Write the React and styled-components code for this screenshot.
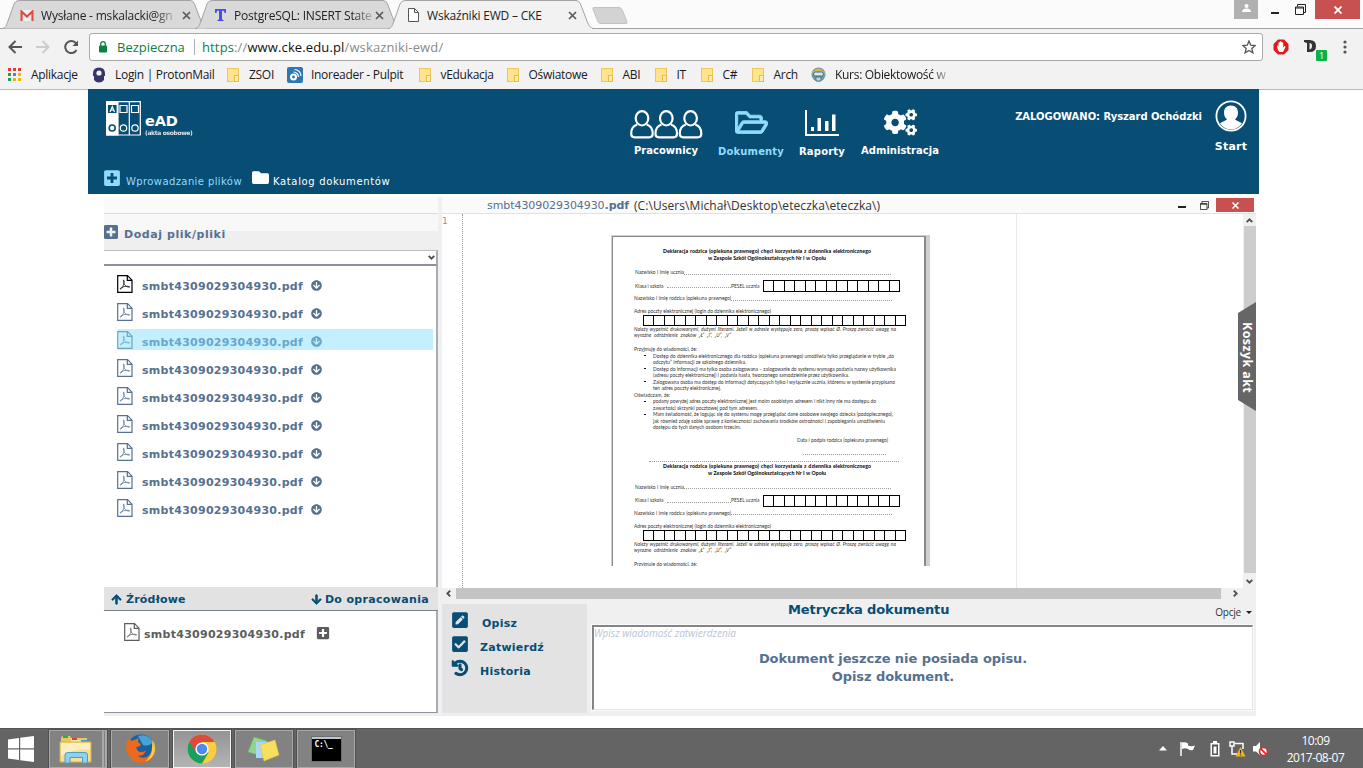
import React from "react";
import styled, { createGlobalStyle, css } from "styled-components";
import {
  FaArrowCircleDown, FaArrowDown, FaArrowUp, FaCheckSquare, FaCogs, FaFolder,
  FaHistory, FaPenSquare, FaPlusSquare, FaRegFolderOpen,
} from "react-icons/fa";

const ui = '"Open Sans", "Noto Sans", sans-serif';
const verdana = '"DejaVu Sans", sans-serif';
const navy = "#084d74";
const slate = "#56718f";
const sky = "#8fdcff";

const Global = createGlobalStyle`
  * { box-sizing: border-box; }
  body { margin: 0; background: #fff; overflow: hidden; }
  svg { display: block; flex: none; }
`;

const Screen = styled.div`
  width: 1363px; height: 768px; display: flex; flex-direction: column;
  font-family: ${ui}; font-size: 12px; color: #222; white-space: nowrap;
`;

/* ---------- browser chrome ---------- */
const TabStrip = styled.div`
  height: 29px; flex: none; display: flex; background: #fbfbfb; padding-left: 2px;
  border-bottom: 1px solid #a3a3a3;
`;
const TabBox = styled.div`
  position: relative; width: 206px; height: 29px; margin-right: -13px; flex: none;
  display: flex; align-items: center; padding: 1px 17px 0 18px; z-index: ${p => (p.$active ? 2 : 1)};
`;
const TabShape = styled.svg`position: absolute; left: 0; top: 0; z-index: -1;`;
const TabTitle = styled.span`
  flex: 1; margin-left: ${p => p.$gap}px; letter-spacing: -0.2px;
`;
const FadeText = styled.span`-webkit-mask-image: linear-gradient(90deg, #000 86%, rgba(0, 0, 0, .25));`;
const IconSlot = styled.span`width: ${p => p.$w}px; flex: none; display: flex; justify-content: center;`;
const NewTab = styled.div`
  width: 30px; height: 17px; margin: 7px 0 0 14px; background: #d3d3d3; border: 1px solid #c2c2c2;
  border-radius: 3px; transform: skewX(22deg);
`;
const WindowButtons = styled.div`margin-left: auto; display: flex; height: 19px; padding-right: 3px;`;
const UserBox = styled.div`width: 24px; background: #b0b0b0; display: flex; justify-content: center; padding-top: 4px;`;
const WinBtn = styled.div`
  width: ${p => p.$w}px; display: flex; align-items: center; justify-content: center;
  background: ${p => (p.$close ? "#c75050" : "transparent")};
`;
const Toolbar = styled.div`height: 36px; flex: none; background: #f2f2f2; display: flex; align-items: center; padding: 0 8px;`;
const NavIcons = styled.div`width: 81px; display: flex; gap: 14px;`;
const Omnibox = styled.div`
  width: 1174px; height: 28px; border: 1px solid #a9a9a9; border-radius: 3px; background: #fff;
  display: flex; align-items: center; padding: 0 6px 0 9px; font-size: 13px;
`;
const Secure = styled.span`color: #0b8043; margin-left: 10px; width: 77px;`;
const Divider = styled.span`width: 1px; height: 16px; background: #b0b0b0; margin-right: 7px;`;
const Url = styled.span`flex: 1; color: #8a8a8a; letter-spacing: .13px; b { font-weight: 400; color: #111; } i { font-style: normal; color: #0b8043; }`;
const Extensions = styled.div`flex: 1; display: flex; align-items: center; padding-left: 10px;`;
const ExtD = styled.div`position: relative; margin: 0 15px 0 15px; width: 24px; height: 26px; padding-top: 5px;`;
const Badge = styled.span`
  position: absolute; right: 1px; bottom: -1px; width: 11px; height: 11px; border-radius: 1px; background: #09b34b;
  color: #fff; font-size: 9px; line-height: 11px; text-align: center;
`;
const Bookmarks = styled.div`
  height: 25px; flex: none; background: #f2f2f2; border-bottom: 1px solid #b9b9b9;
  display: flex; align-items: center; padding: 0 0 5px 8px; letter-spacing: -0.3px; color: #1a1a1a;
`;
const Bookmark = styled.div`width: ${p => p.$w}px; display: flex; align-items: center; flex: none;`;
const BmText = styled.span`
  margin-left: ${p => p.$gap || 10}px;
  ${p => p.$fade && css`-webkit-mask-image: linear-gradient(90deg, #000 86%, rgba(0, 0, 0, .35));`}
`;
const FolderMark = styled.span`
  width: 12px; height: 14px; background: #ffe48c; border: 1px solid #ecc75a; flex: none; position: relative;
  &::after { content: ""; position: absolute; right: -1px; bottom: -1px; width: 3px; height: 5px; border: 1px solid #e5bd48; background: #ffedb0; }
`;

/* ---------- application ---------- */
const Main = styled.main`width: 1171px; height: 638px; margin-left: 88px; flex: none; display: flex; flex-direction: column;`;
const Header = styled.header`
  height: 105px; flex: none; background: ${navy}; color: #fff; font-family: ${verdana};
  display: flex; flex-direction: column; padding: 11px 11px 0 16px; margin-top: -1px;
`;
const HeaderTop = styled.div`display: flex; height: 70px;`;
const Brand = styled.div`width: 526px; display: flex; padding: 1px 0 0 2px;`;
const BrandText = styled.div`margin: 12px 0 0 4px; display: flex; flex-direction: column;`;
const BrandName = styled.b`font-size: 14.5px; line-height: 17px; letter-spacing: -0.2px;`;
const BrandSub = styled.b`font-size: 6px; line-height: 6px; letter-spacing: -0.35px; opacity: .85;`;
const NavItem = styled.div`
  width: ${p => p.$w}px; margin-right: ${p => p.$mr || 0}px; color: ${p => (p.$active ? sky : "#fff")};
  display: flex; flex-direction: column; align-items: center; flex: none;
  font-weight: 700; font-size: 10px; line-height: 13px; letter-spacing: ${p => p.$ls || 0}px;
`;
const NavIcon = styled.div`height: ${p => p.$h}px; display: flex; align-items: center; padding-top: ${p => p.$pt || 0}px;`;
const UserInfo = styled.b`margin-left: auto; margin-top: 10px; font-size: 10px; letter-spacing: -0.05px; line-height: 13px;`;
const StartItem = styled.div`
  width: 34px; margin-left: 12px; display: flex; flex-direction: column; align-items: center;
  font-size: 11px; font-weight: 700; gap: 8px; letter-spacing: .2px; line-height: 13px;
`;
const SubNav = styled.div`display: flex; align-items: flex-start; font-size: 10px; margin: -1px 0 0 -1px;`;
const SubText = styled.span`margin: ${p => p.$m}; line-height: 13px; letter-spacing: ${p => p.$ls}px; color: ${p => p.$c || "#fff"};`;

const Body = styled.div`flex: 1; display: flex; padding: 3px 0 0 16px; min-height: 0;`;
const Left = styled.section`
  width: 338px; display: flex; flex-direction: column; font-family: ${verdana}; height: 519px; flex: none;
  border-right: 4px solid #f0f0f0; border-bottom: 3px solid #eee;
`;
const LeftCap = styled.div`height: 17px; background: #fafafa; border-bottom: 1px solid #dcdcdc;`;
const AddBar = styled.div`
  height: 36px; background: linear-gradient(#f8f8f8 0 17px, #efefef 17px); display: flex; align-items: center;
  color: ${slate}; font-size: 11px; font-weight: 700; letter-spacing: .56px; gap: 5px;
  svg { margin-left: -1px; } span { margin-top: 4px; }
`;
const Select = styled.div`
  height: 16px; background: #fff; border-top: 1px solid #bdbdbd; border-right: 2px solid #a9adb5; border-bottom: 2px solid #8e939b;
  display: flex; align-items: center; justify-content: flex-end; padding-right: 0;
`;
const Files = styled.div`
  height: ${p => p.$h}px; border-right: 2px solid #a9adb5; border-bottom: ${p => (p.$line ? "1px solid #8c929b" : 0)};
  background: #fff; padding: ${p => p.$pad};
`;
const FileRow = styled.div`
  display: flex; height: 21px; margin-bottom: 7px; align-items: center; padding-left: 1px;
  background: ${p => (p.$sel ? "linear-gradient(90deg, transparent 2px, #c3efff 2px)" : "none")};
  color: ${p => (p.$sel ? "#6ba5c8" : p.$grey ? "#5d5d5d" : slate)};
`;
const FileName = styled.b`font-size: 11px; line-height: 13px; letter-spacing: .27px; margin: 5px ${p => p.$mr || 8}px 0 ${p => p.$ml}px; width: 161px;`;
const RowMark = styled.span`margin-top: ${p => p.$mt}px;`;
const MoveBar = styled.div`
  height: 24px; background: #e2e2e2; border-bottom: 1px solid #7b8492; display: flex; align-items: center;
  padding: 1px 9px 0 7px; gap: 4px; color: ${navy}; font-weight: 700; font-size: 11px; letter-spacing: .2px;
  svg { stroke: currentColor; stroke-width: 34px; }
`;
const MoveTarget = styled.span`margin-left: auto; display: flex; align-items: center; gap: 3px; letter-spacing: .33px;`;

const Right = styled.section`width: 814px; height: 519px; flex: none; display: flex; flex-direction: column; background: #f0f0f0; border-bottom: 3px solid #eee;`;
const TitleBar = styled.div`
  height: 17px; background: #fafafa; border-bottom: 1px solid #e2e2e2; display: flex; align-items: center; padding-left: 45px;
`;
const TitleButtons = styled.div`display: flex; height: 14px; margin-right: 2px;`;
const DocName = styled.span`font-family: ${verdana}; font-size: 11px; letter-spacing: -0.07px; color: ${slate}; width: 147px;`;
const Path = styled.span`font-size: 12px; flex: 1; color: #333; letter-spacing: .07px;`;
const Editor = styled.div`height: 374px; display: flex; flex: none;`;
const Gutter = styled.div`
  width: 21px; border-right: 1px dotted #999; background: #fff; color: #8f8f8f; font: 9px/13px "DejaVu Sans Mono", monospace; padding-top: 1px;
`;
const Canvas = styled.div`width: 554px; background: #fff; border-right: 1px solid #e8e8e8; padding: 21px 0 0 148px;`;
const Blank = styled.div`flex: 1; background: #fff;`;
const VScroll = styled.div`position: relative; width: 13px; display: flex; flex-direction: column; align-items: center; padding: 2px 0;`;
const VThumb = styled.div`width: 12px; height: 347px; margin: 1px 0 4px; background: #cdcdcd;`;
const BasketTab = styled.div`
  position: absolute; left: -5px; top: 88px; width: 18px; height: 109px; background: #666;
  clip-path: polygon(0 11px, 100% 0, 100% 100%, 0 98px); display: flex; align-items: center; justify-content: center;
  writing-mode: vertical-rl; color: #fff; font: 700 12.5px ${ui}; letter-spacing: .4px; padding-top: 2px;
`;
const HScroll = styled.div`height: 11px; display: flex; align-items: center; padding-left: 2px; flex: none;`;
const HThumb = styled.div`width: 765px; height: 11px; background: #c4c4c4; margin: 0 10px 0 3px;`;

/* ---------- previewed form ---------- */
const PageEdge = styled.div`width: 319px; height: 331px; background: #d0d0d0; padding: 1px 4px 0 1px;`;
const Paper = styled.div`
  width: 314px; height: 330px; border: 2px solid #8a8a8a; border-bottom: 0; border-left-width: 1px; border-top-width: 1px;
  background: #fff; padding: 11px 0 0 21px; overflow: hidden; font-family: Lato, sans-serif; font-size: 4.9px; color: #333;
`;
const Line = styled.div`
  height: ${p => p.$h || 6.5}px; line-height: ${p => p.$h || 6.5}px; margin: ${p => p.$mt || 0}px 0 0 ${p => p.$x || 0}px;
  width: ${p => p.$w}px; white-space: nowrap; text-align: justify; text-align-last: justify; position: relative;
  font-weight: ${p => (p.$bold ? 900 : 400)}; font-style: ${p => (p.$it ? "italic" : "normal")};
  ${p => p.$it && css`letter-spacing: .06px; word-spacing: -0.2px;`}
  ${p => p.$bold && css`font-size: 5.2px; letter-spacing: ${p.$ls ?? 0.06}px; color: #111;`} flex: none;
`;
const Bullet = styled.span`position: absolute; left: -9px; top: 2.5px; width: 2px; height: 1px; background: #111;`;
const DotRow = styled.div`display: flex; align-items: center; height: ${p => p.$h || 7}px; margin: ${p => p.$mt || 0}px 0 0 ${p => p.$x || 0}px; line-height: 7px;`;
const Dots = styled.div`width: ${p => p.$w}px; margin: ${p => p.$m || "3px 0 0"}; border-top: 1px dotted #9c9c9c; flex: none;`;
const Cells = styled.div`
  display: flex; width: ${p => p.$w}px; height: ${p => p.$h}px; margin-left: ${p => p.$x}px;
  border: 1px solid #000; background: #fff; flex: none;
`;
const Cell = styled.span`flex: 1; border-right: 1px solid #000; &:last-child { border: 0; }`;

/* ---------- lower panel ---------- */
const Lower = styled.div`flex: 1; display: flex; padding-top: 5px;`;
const Actions = styled.div`
  width: 145px; background: #e3e3e3; padding: 4px 0 0 9px; color: ${navy}; font: 700 11px/16px ${verdana}; letter-spacing: .25px;
`;
const Action = styled.div`
  display: flex; align-items: center; height: 24px; span { margin: 7px 0 0 ${p => p.$gap}px; }
  ${p => p.$heavy && css`svg { stroke: currentColor; stroke-width: 34px; overflow: visible; margin-left: 1px; }`}
`;
const Details = styled.div`flex: 1; padding: 0 3px 0 5px; font-family: ${verdana};`;
const DetailsHead = styled.div`height: 21px; display: flex; color: ${navy}; font-size: 13px; line-height: 11px;`;
const Heading = styled.b`margin-left: 196px; letter-spacing: -0.1px; flex: 1;`;
const Options = styled.span`
  font: 10px/14px ${ui}; color: #333; margin: 1px 1px 0 0; display: flex; align-items: center; gap: 5px; height: 14px; letter-spacing: -0.2px;
  &::after { content: ""; border: 3px solid transparent; border-top-color: #222; border-bottom: 0; }
`;
const Message = styled.div`
  height: 85px; width: 661px; background: #fff; border: 1px solid #e4e4e4; border-top: 2px solid #858585; border-left: 2px solid #858585;
  box-shadow: 0 0 0 1px #fafafa; display: flex; flex-direction: column; color: ${slate}; text-align: center;
`;
const Hint = styled.i`font: italic 10px/13px "Open Sans", sans-serif; color: #b7c5d6; text-align: left; margin-bottom: 10px;`;
const Note = styled.b`font-size: 13px; line-height: 18px; margin-right: 60px; letter-spacing: -0.07px;`;

/* ---------- taskbar ---------- */
const Taskbar = styled.footer`height: 40px; flex: none; background: #646464; border-top: 1px solid #555; display: flex; align-items: center; padding-left: 8px;`;
const TaskButtons = styled.div`display: flex; gap: 4px; margin-left: 15px;`;
const TaskBtn = styled.div`
  width: 58px; height: 38px; display: flex; align-items: center; justify-content: center;
  background: ${p => (p.$on ? "linear-gradient(#949494, #b4b4b4)" : "#828282")}; border: 1px solid ${p => (p.$on ? "#f2f2f2" : "#a9a9a9")};
  box-shadow: 0 0 0 1px #505050; ${p => p.$stack && css`border-right: 5px double #a9a9a9;`}
`;
const Tray = styled.div`margin-left: auto; display: flex; align-items: center;`;
const TrayIcon = styled.span`margin-right: ${p => p.$mr}px;`;
const Clock = styled.div`width: 94px; color: #fff; font: 12px/17px ${ui}; text-align: center; letter-spacing: -0.5px; padding: 1px 1px 0 0;`;

function Tab({ icon, iconW, gap, active, fade, children }) {
  return (
    <TabBox $active={active}>
      <TabShape width="206" height="30">
        <path d="M0 28.500C4 28 4 26 6 21L12 4Q13.500 0.500 17 0.500H188Q191 0.500 192.500 4L199 21C201 26 202 28 206 28.500"
          fill={active ? "#f2f2f2" : "#d9d9d9"} stroke="#a3a3a3" />
        {active && <path d="M2 29H204" stroke="#f2f2f2" strokeWidth="2" />}
      </TabShape>
      <IconSlot $w={iconW}>{icon}</IconSlot>
      <TabTitle $gap={gap}>{fade ? <FadeText>{children}</FadeText> : children}</TabTitle>
      <svg width="9" height="9"><path d="M1 1L8 8M8 1L1 8" stroke="#5a5a5a" strokeWidth="1.700" /></svg>
    </TabBox>
  );
}

const Restore = ({ s = 11 }) => (
  <svg width={s} height={s} viewBox="0 0 11 11" fill="none" stroke="#222"><path d="M2.500 2.500V.5H10.500V8.500H8.500M.5 3H8.500V10.500H.5ZM.5 4H8.500" /></svg>
);
const chevrons = {
  up: "M1.500 5.500L4 3L6.500 5.500", down: "M1.500 2.500L4 5L6.500 2.500", left: "M5.500 1.500L3 4L5.500 6.500", right: "M2.500 1.500L5 4L2.500 6.500",
};
const Chevron = ({ dir }) => (
  <svg width="9" height="9" viewBox="0 0 8 8"><path d={chevrons[dir]} fill="none" stroke="#505050" strokeWidth="1.700" /></svg>
);

function PdfIcon({ color = slate }) {
  return (
    <svg width="16" height="18" viewBox="0 0 16 18" fill="none" stroke={color}>
      <path d="M.7 .7H10.500L15 5.200V17.300H.7ZM10.300 .9V5.400H15" strokeWidth="1.200" />
      <path d="M6.500 5C7.800 5 7 8 6.500 10C5.500 12.500 4 14.500 3 14C2.800 13.300 5 12.300 7 11.600C9.500 11 12.700 11.200 12.800 11.900C12.500 12.600 9.500 12 8 10.300C7 9 6 6 6.500 5Z" strokeWidth=".7" />
    </svg>
  );
}

const Logo = () => (
  <svg width="35" height="35" fill="none" stroke="#fff" strokeWidth="1.200">
    <path d="M.7 .7H34.300V34H.7Z" /><path d="M.7 .7H12V34H.7Z" fill="#fff" /><path d="M23.300 1V34" />
    <path d="M2.500 4.500H10V11.500H2.500Z" fill={navy} stroke={navy} /><path d="M4 11L6.300 5.500L8.500 11M5 9H8" stroke="#fff" />
    <path d="M14 4.500H21V11.500H14ZM25.500 4.500H32.500V11.500H25.500Z" />
    <circle cx="6.200" cy="27" r="3" stroke={navy} strokeWidth="1.600" /><circle cx="17.500" cy="27" r="3.200" /><circle cx="29" cy="27" r="3.200" />
  </svg>
);

const PeopleIcon = () => (
  <svg width="73" height="29" fill={navy} stroke="#fff" strokeWidth="2.200">
    {[-0.3, 24, 48.3].map(x => (
      <g key={x} transform={`translate(${x} 0)`}>
        <path d="M7.500 14.500C3 16 1.500 19.500 1.500 23.500Q1.500 27.300 5 27.300H19.500Q23 27.300 23 23.500C23 19.500 21.500 16 17 14.500" />
        <ellipse cx="12.300" cy="8.300" rx="6.300" ry="7.200" />
      </g>
    ))}
  </svg>
);

const ReportsIcon = () => (
  <svg width="34" height="26" fill="#fff"><path d="M0 0H2V24H34V26H0ZM6 17H9V21H6ZM12.500 8H16V21H12.500ZM20 11H23.500V21H20ZM27 4.500H30.500V21H27Z" /></svg>
);

const UserIcon = () => (
  <svg width="32" height="32">
    <circle cx="16" cy="16" r="14.600" fill="none" stroke="#fff" strokeWidth="1.800" />
    <path d="M16 5.500C20.500 5.500 23 8.500 23 12.500C23 15.500 22 18 20 19.300C21 21 25 21.500 27 23.500Q22.500 29.500 16 29.500T5 23.500C7 21.500 11 21 12 19.300C10 18 9 15.500 9 12.500C9 8.500 11.500 5.500 16 5.500Z" fill="#fff" />
  </svg>
);

const FormCells = ({ n, ...p }) => <Cells {...p}>{Array.from({ length: n }, (_, i) => <Cell key={i} />)}</Cells>;

function Declaration() {
  return (
    <>
      <Line $bold $h={7} $x={29} $w={208}>Deklaracja rodzica (opiekuna prawnego) chęci korzystania z dziennika elektronicznego</Line>
      <Line $bold $h={7} $x={74} $w={118} $ls={0.02}>w Zespole Szkół Ogólnokształcących Nr I w Opolu</Line>
      <DotRow $mt={7} $x={1}><Line $w={49}>Nazwisko i imię ucznia</Line><Dots $w={207} /></DotRow>
      <DotRow $mt={4} $h={12} $x={1}>
        <Line $w={28}>Klasa i szkoła</Line><Dots $w={64} $m="3px 0 0 4px" />
        <Line $w={28}>PESEL ucznia</Line><FormCells n={13} $w={137} $h={12} $x={4} />
      </DotRow>
      <DotRow $mt={3}><Line $w={97}>Nazwisko i imię rodzica (opiekuna prawnego)</Line><Dots $w={161} /></DotRow>
      <Line $h={7} $mt={6} $w={137}>Adres poczty elektronicznej (login do dziennika elektronicznego)</Line>
      <FormCells n={25} $w={263} $h={11} $x={9} />
      <Line $it $h={6.3} $w={262}>Należy wypełnić drukowanymi, dużymi literami. Jeżeli w adresie występuje zero, proszę wpisać Ø. Proszę zwrócić uwagę na</Line>
      <Line $it $h={6.3} $w={97}>wyraźne odróżnienie znaków „Ł” „I”, „U”, „V”</Line>
      <Line $mt={7.5} $w={63}>Przyjmuję do wiadomości, że:</Line>
    </>
  );
}

const terms = [
  [1, 241, "Dostęp do dziennika elektronicznego dla rodzica (opiekuna prawnego) umożliwia tylko przeglądanie w trybie „do"],
  [0, 93, "odczytu” informacji ze szkolnego dziennika."],
  [1, 243, "Dostęp do informacji ma tylko osoba zalogowana – zalogowanie do systemu wymaga podania nazwy użytkownika"],
  [0, 196, "(adresu poczty elektronicznej) i podania hasła, tworzonego samodzielnie przez użytkownika."],
  [1, 242, "Zalogowana osoba ma dostęp do informacji dotyczących tylko i wyłącznie ucznia, któremu w systemie przypisano"],
  [0, 68, "ten adres poczty elektronicznej."],
  [2, 36, "Oświadczam, że:"],
  [1, 223, "podany powyżej adres poczty elektronicznej jest moim osobistym adresem i nikt inny nie ma dostępu do"],
  [0, 105, "zawartości skrzynki pocztowej pod tym adresem."],
  [1, 240, "Mam świadomość, że logując się do systemu mogę przeglądać dane osobowe swojego dziecka (podopiecznego),"],
  [0, 232, "jak również zdaję sobie sprawę z konieczności zachowania środków ostrożności i zapobiegania umożliwieniu"],
  [0, 88, "dostępu do tych danych osobom trzecim."],
];

const folders = [["vEdukacja", 88], ["Oświatowe", 94], ["ABI", 54], ["IT", 46], ["C#", 51], ["Arch", 59]];
const appsColors = ["#e33d32", "#e33d32", "#e33d32", "#1e9e58", "#4285f4", "#f5b400", "#1e9e58", "#f5b400", "#f5b400"];
const fileName = "smbt4309029304930.pdf";

const ExplorerIcon = () => (
  <svg width="34" height="30">
    <path d="M2 4L3 2H11L12 4H28V26H2Z" fill="#e9c765" /><path d="M12 4H16V6H28V8H12Z" fill="#f7e7a8" />
    <rect x="4" y="2" width="5" height="2" fill="#2fae47" /><rect x="13" y="4" width="5" height="2" fill="#d6452d" /><rect x="22" y="6" width="6" height="2" fill="#3c9bdd" />
    <path d="M1 8H32V28H1Z" fill="#f6df92" stroke="#d6b04c" /><path d="M2 9H31V16Q16 14 2 22Z" fill="#fbefbd" />
    <path d="M6 29V21Q6 18.500 8.500 18.500H26Q28.500 18.500 28.500 21V29H23.500V23.500H11V29Z" fill="#8fd0ee" stroke="#4b9fc9" />
  </svg>
);
const FirefoxIcon = () => (
  <svg width="31" height="31">
    <circle cx="16" cy="15" r="13.500" fill="#1c5f9e" /><path d="M13 3Q23 0 28 9Q24 14 18 12Z" fill="#44a4d6" />
    <path d="M27 7Q32 14 29 21Q25 30 15.500 30T1 17Q.5 10 4 5L6.500 8Q8 6.500 11 6.500L13.500 4.500L13 9L16 11.500Q14 14 11.500 14Q11 17.500 15 19Q19 19 21 17.500Q18.500 24 12.500 22.500Q18 27 24 22.500Q29 17 27 7Z" fill="#ea6a1f" />
    <path d="M27.500 7Q32 14 29 21Q26 27 20 28.500Q27 23 27 15Z" fill="#f8ca45" />
  </svg>
);
const ChromeIcon = () => (
  <svg width="30" height="30">
    <circle cx="15" cy="15" r="14.500" fill="#fccd3f" /><path d="M15 15L2.400 7.800A14.500 14.500 0 0 0 15 29.500L21.500 18.500Z" fill="#17a05e" />
    <path d="M15 15L8.500 18L2.400 7.800A14.500 14.500 0 0 1 27.600 8H15Z" fill="#dd4b3e" /><circle cx="15" cy="15" r="6.600" fill="#fff" /><circle cx="15" cy="15" r="5.200" fill="#4b89f3" />
  </svg>
);
const NotesIcon = () => (
  <svg width="34" height="26"><path d="M7 1L20 5L15 20L1 16Z" fill="#8fd68b" stroke="#6db96a" strokeWidth=".6" /><path d="M9 6H22V22H9Z" fill="#a9d8f8" /><path d="M13 9L28 4L32 19L17 25Z" fill="#f8e05f" stroke="#dcc145" strokeWidth=".6" /></svg>
);
const Prompt = styled.div`
  width: 29px; height: 24px; background: #000; border-top: 2px solid #b8c6d6; outline: 1px solid #6f6f6f;
  color: #fff; font: 700 8px/12px "DejaVu Sans Mono", monospace; padding: 0 0 0 3px; letter-spacing: -0.3px;
`;

export default function App() {
  return (
    <Screen>
      <Global />
      <TabStrip>
        <Tab iconW={14} gap={7} fade icon={<svg width="14" height="11"><rect width="14" height="11" fill="#eee" /><path d="M1.500 11V1.500L7 6.500L12.500 1.500V11" fill="none" stroke="#dd4b3e" strokeWidth="2.200" /></svg>}>Wysłane - mskalacki@gn</Tab>
        <Tab iconW={14} gap={7} fade icon={<svg width="11" height="12"><path d="M0 0H11V4H9.500L9 1.800H7V10.500L8.500 11V12H2.500V11L4 10.500V1.800H2L1.500 4H0Z" fill="#4550e6" /></svg>}>PostgreSQL: INSERT State</Tab>
        <Tab iconW={14} gap={7} active icon={<svg width="11" height="14" fill="#fff" stroke="#555"><path d="M.5 .5H6.500L10.500 4.500V13.500H.5ZM6.500 .5V4.500H10.500" /></svg>}>Wskaźniki EWD – CKE</Tab>
        <NewTab />
        <WindowButtons>
          <UserBox><svg width="9" height="8" fill="#fff"><circle cx="4.500" cy="2" r="2" /><path d="M0 8Q0 4.500 4.500 4.500T9 8Z" /></svg></UserBox>
          <WinBtn $w={33}><svg width="8" height="8"><path d="M0 7H8" stroke="#222" strokeWidth="2" /></svg></WinBtn>
          <WinBtn $w={19}><Restore /></WinBtn>
          <WinBtn $w={5} />
          <WinBtn $w={45} $close><svg width="8" height="8"><path d="M.5 .5L7.500 7.500M7.500 .5L.5 7.500" stroke="#fff" strokeWidth="1.800" /></svg></WinBtn>
        </WindowButtons>
      </TabStrip>
      <Toolbar>
        <NavIcons>
          <svg width="14" height="14" fill="none" stroke="#555" strokeWidth="2"><path d="M14 7H1.500M7.500 1L1.500 7L7.500 13" /></svg>
          <svg width="14" height="14" fill="none" stroke="#ccc" strokeWidth="2"><path d="M0 7H12.500M6.500 1L12.500 7L6.500 13" /></svg>
          <svg width="15" height="14" fill="none" stroke="#555" strokeWidth="2"><path d="M12.500 10A6 6 0 1 1 11.500 2.800L13 4.500" /><path d="M14 .5V6H8.500Z" fill="#555" stroke="none" /></svg>
        </NavIcons>
        <Omnibox>
          <svg width="8" height="12"><rect y="4.500" width="8" height="7" rx="1" fill="#0b8043" /><path d="M1.700 5V3A2.300 2.300 0 0 1 6.300 3V5" fill="none" stroke="#0b8043" strokeWidth="1.300" /></svg>
          <Secure>Bezpieczna</Secure><Divider />
          <Url><i>https</i>://<b>www.cke.edu.pl</b>/wskazniki-ewd/</Url>
          <svg width="14" height="14" viewBox="0 0 14 14"><path d="M7 1L8.700 5.200L13.200 5.500L9.800 8.400L10.900 12.800L7 10.400L3.100 12.800L4.200 8.400L.8 5.500L5.300 5.200Z" fill="none" stroke="#555" strokeWidth="1.300" /></svg>
        </Omnibox>
        <Extensions>
          <svg width="16" height="16"><path d="M5 .5H11L15.500 5V11L11 15.500H5L.5 11V5Z" fill="#e11b1b" /><path d="M4 7.500Q4.500 6 5.500 7V3.500Q6.300 2.500 7 3.500V2.600Q8 1.800 8.600 2.600V3.500Q9.600 2.800 10.200 4V8.500L11.500 7Q12.800 6.800 12.300 8.500L10 13H6.500Q4.500 11 4 7.500Z" fill="#fff" /></svg>
          <ExtD><svg width="12" height="14"><path d="M0 1H5.500Q12 1 12 7T5.500 13H3V4L0 3Z" fill="#333" /><path d="M5.500 4V10.500Q8 10 8 7T5.500 4Z" fill="#eee" /></svg><Badge>1</Badge></ExtD>
          <svg width="4" height="14" fill="#555"><circle cx="2" cy="2" r="1.600" /><circle cx="2" cy="7" r="1.600" /><circle cx="2" cy="12" r="1.600" /></svg>
        </Extensions>
      </Toolbar>
      <Bookmarks>
        <Bookmark $w={84}>
          <svg width="13" height="13">{appsColors.map((c, i) => <rect key={i} x={(i % 3) * 5} y={Math.floor(i / 3) * 5} width="3" height="3" fill={c} />)}</svg>
          <BmText>Aplikacje</BmText>
        </Bookmark>
        <Bookmark $w={135}>
          <svg width="14" height="16"><path d="M1 6.500Q1 .5 7 .5T13 6.500V9H12V13Q10 15.500 7 15.500T2 13V9H1Z" fill="#35356f" /><circle cx="7" cy="6" r="2.600" fill="#f2f2f2" /></svg>
          <BmText $gap={9}>Login | ProtonMail</BmText>
        </Bookmark>
        <Bookmark $w={60}><FolderMark /><BmText>ZSOI</BmText></Bookmark>
        <Bookmark $w={132}>
          <svg width="16" height="16"><rect width="16" height="16" rx="2" fill="#2d78b0" /><circle cx="6.500" cy="10" r="3.500" fill="#fff" /><circle cx="6.500" cy="10" r="1.400" fill="#2d78b0" /><path d="M6.500 5A5 5 0 0 1 11.500 10M7.500 2.500A6.500 6.500 0 0 1 14 9" fill="none" stroke="#fff" strokeWidth="1.200" /></svg>
          <BmText $gap={8}>Inoreader - Pulpit</BmText>
        </Bookmark>
        {folders.map(([t, w]) => <Bookmark key={t} $w={w}><FolderMark /><BmText $gap={9.5}>{t}</BmText></Bookmark>)}
        <Bookmark $w={140}>
          <svg width="15" height="15"><circle cx="7.500" cy="7.500" r="7" fill="#6e98a6" /><path d="M1 6Q7 -3 14 6L12 9H3Z" fill="#dcb64a" /><rect x="2.500" y="5" width="10" height="4" rx="2" fill="#d8e7ee" stroke="#3a6e84" /><path d="M5 10H10V14H5Z" fill="#c2d4da" stroke="#487b8b" /></svg>
          <BmText $fade $gap={9}>Kurs: Obiektowość w</BmText>
        </Bookmark>
      </Bookmarks>

      <Main>
        <Header>
          <HeaderTop>
            <Brand><Logo /><BrandText><BrandName>eAD</BrandName><BrandSub>(akta osobowe)</BrandSub></BrandText></Brand>
            <NavItem $w={72} $mr={16}><NavIcon $h={44} $pt={5}><PeopleIcon /></NavIcon>Pracownicy</NavItem>
            <NavItem $w={66} $mr={15} $ls={0.15} $active><NavIcon $h={45}><FaRegFolderOpen size={33} stroke="currentColor" strokeWidth={14} /></NavIcon>Dokumenty</NavItem>
            <NavItem $w={46} $mr={16} $ls={0.2}><NavIcon $h={45} $pt={1}><ReportsIcon /></NavIcon>Raporty</NavItem>
            <NavItem $w={78}><NavIcon $h={44}><FaCogs size={33} /></NavIcon>Administracja</NavItem>
            <UserInfo>ZALOGOWANO: Ryszard Ochódzki</UserInfo>
            <StartItem><UserIcon />Start</StartItem>
          </HeaderTop>
          <SubNav>
            <FaPlusSquare size={18} color={sky} />
            <SubText $m="6px 10px 0 5px" $ls={0.4} $c={sky}>Wprowadzanie plików</SubText>
            <FaFolder size={17} />
            <SubText $m="6px 0 0 4px" $ls={0.65}>Katalog dokumentów</SubText>
          </SubNav>
        </Header>

        <Body>
          <Left>
            <LeftCap />
            <AddBar><FaPlusSquare size={16} /><span>Dodaj plik/pliki</span></AddBar>
            <Select><Chevron dir="down" /></Select>
            <Files $h={321} $pad="7px 3px 0 12px">
              {Array.from({ length: 9 }, (_, i) => (
                <FileRow key={i} $sel={i === 2}>
                  <PdfIcon color={i === 0 ? "#000" : i === 2 ? "#6ba5c8" : slate} />
                  <FileName $ml={9}>{fileName}</FileName>
                  <RowMark $mt={3}><FaArrowCircleDown size={11} /></RowMark>
                </FileRow>
              ))}
            </Files>
            <MoveBar>
              <FaArrowUp size={11} />Źródłowe
              <MoveTarget><FaArrowDown size={11} />Do opracowania</MoveTarget>
            </MoveBar>
            <Files $h={102} $pad="10px 0 0 19px" $line>
              <FileRow $grey>
                <PdfIcon color="#5d5d5d" />
                <FileName $ml={4} $mr={11}>{fileName}</FileName>
                <RowMark $mt={2}><FaPlusSquare size={14} /></RowMark>
              </FileRow>
            </Files>
          </Left>

          <Right>
            <TitleBar>
              <DocName>smbt4309029304930<b>.pdf</b></DocName>
              <Path>(C:\Users\Michał\Desktop\eteczka\eteczka\)</Path>
              <TitleButtons>
                <WinBtn $w={24}><svg width="8" height="8"><path d="M0 6H8" stroke="#222" strokeWidth="2" /></svg></WinBtn>
                <WinBtn $w={20}><Restore s={9} /></WinBtn>
                <WinBtn $w={2} />
                <WinBtn $w={38} $close><svg width="7" height="7"><path d="M.5 .5L6.500 6.500M6.500 .5L.5 6.500" stroke="#fff" strokeWidth="1.500" /></svg></WinBtn>
              </TitleButtons>
            </TitleBar>
            <Editor>
              <Gutter>1</Gutter>
              <Canvas>
                <PageEdge>
                  <Paper>
                    <Declaration />
                    {terms.map(([kind, w, text]) => (
                      <Line key={text} $x={kind === 2 ? 0 : 19} $w={w}>{kind === 1 && <Bullet />}{text}</Line>
                    ))}
                    <Line $mt={6.5} $x={163} $w={91}>Data i podpis rodzica (opiekuna prawnego)</Line>
                    <Dots $w={83} $m="10px 0 0 169px" />
                    <Dots $w={250} $m="6px 0 1px 15px" />
                    <Declaration />
                  </Paper>
                </PageEdge>
              </Canvas>
              <Blank />
              <VScroll><Chevron dir="up" /><VThumb /><Chevron dir="down" /><BasketTab>Koszyk akt</BasketTab></VScroll>
            </Editor>
            <HScroll><Chevron dir="left" /><HThumb /><Chevron dir="right" /></HScroll>
            <Lower>
              <Actions>
                <Action $gap={13}><FaPenSquare size={18} /><span>Opisz</span></Action>
                <Action $gap={11}><FaCheckSquare size={18} /><span>Zatwierdź</span></Action>
                <Action $gap={12} $heavy><FaHistory size={16} /><span>Historia</span></Action>
              </Actions>
              <Details>
                <DetailsHead><Heading>Metryczka dokumentu</Heading><Options>Opcje</Options></DetailsHead>
                <Message>
                  <Hint>Wpisz wiadomość zatwierdzenia</Hint>
                  <Note>Dokument jeszcze nie posiada opisu.</Note>
                  <Note>Opisz dokument.</Note>
                </Message>
              </Details>
            </Lower>
          </Right>
        </Body>
      </Main>

      <Taskbar>
        <svg width="26" height="26" fill="#fff"><path d="M0 3.500L11 2V12.300H0ZM12.200 1.800L26 0V12.300H12.200ZM0 13.500H11V24L0 22.500ZM12.200 13.500H26V26L12.200 24.200Z" /></svg>
        <TaskButtons>
          <TaskBtn $stack><ExplorerIcon /></TaskBtn>
          <TaskBtn><FirefoxIcon /></TaskBtn>
          <TaskBtn $on><ChromeIcon /></TaskBtn>
          <TaskBtn><NotesIcon /></TaskBtn>
          <TaskBtn><Prompt>C:\_</Prompt></TaskBtn>
        </TaskButtons>
        <Tray>
          <TrayIcon $mr={13}><svg width="8" height="5"><path d="M4 0L8 4.500H0Z" fill="#fff" /></svg></TrayIcon>
          <TrayIcon $mr={14}><svg width="16" height="16"><path d="M1 1V15" stroke="#fff" strokeWidth="1.500" /><path d="M2 1.500Q5 .5 8 2.500V4.500Q11 6 15 4.500L13 9Q10 10 8 8Q5 6.500 2 8Z" fill="#fff" /></svg></TrayIcon>
          <TrayIcon $mr={9}><svg width="10" height="16"><path d="M3 0H7V2H9.500V15.500H.5V2H3Z" fill="#fff" /><path d="M2 3.500H8V14H2Z" fill="#555" /><path d="M3.500 5.500H6.500V12.500H3.500Z" fill="#fff" /></svg></TrayIcon>
          <TrayIcon $mr={7}><svg width="17" height="16"><path d="M1 1H5V5H1ZM3 5V13H8M6 2.500H14V8" fill="none" stroke="#fff" strokeWidth="1.500" /><path d="M11.500 6L16.500 15.500H6.500Z" fill="#f7b512" /><path d="M11.500 9V12.500M11.500 13.500V14.500" stroke="#333" strokeWidth="1.200" /></svg></TrayIcon>
          <TrayIcon $mr={0}><svg width="16" height="16"><path d="M0 5H3L7 1V14L3 10.500H0Z" fill="#fff" /><circle cx="10.500" cy="10.500" r="4" fill="#fff" stroke="#e0272b" strokeWidth="1.700" /><path d="M7.700 7.700L13.300 13.300" stroke="#e0272b" strokeWidth="1.700" /></svg></TrayIcon>
          <Clock>10:09<br />2017-08-07</Clock>
        </Tray>
      </Taskbar>
    </Screen>
  );
}
